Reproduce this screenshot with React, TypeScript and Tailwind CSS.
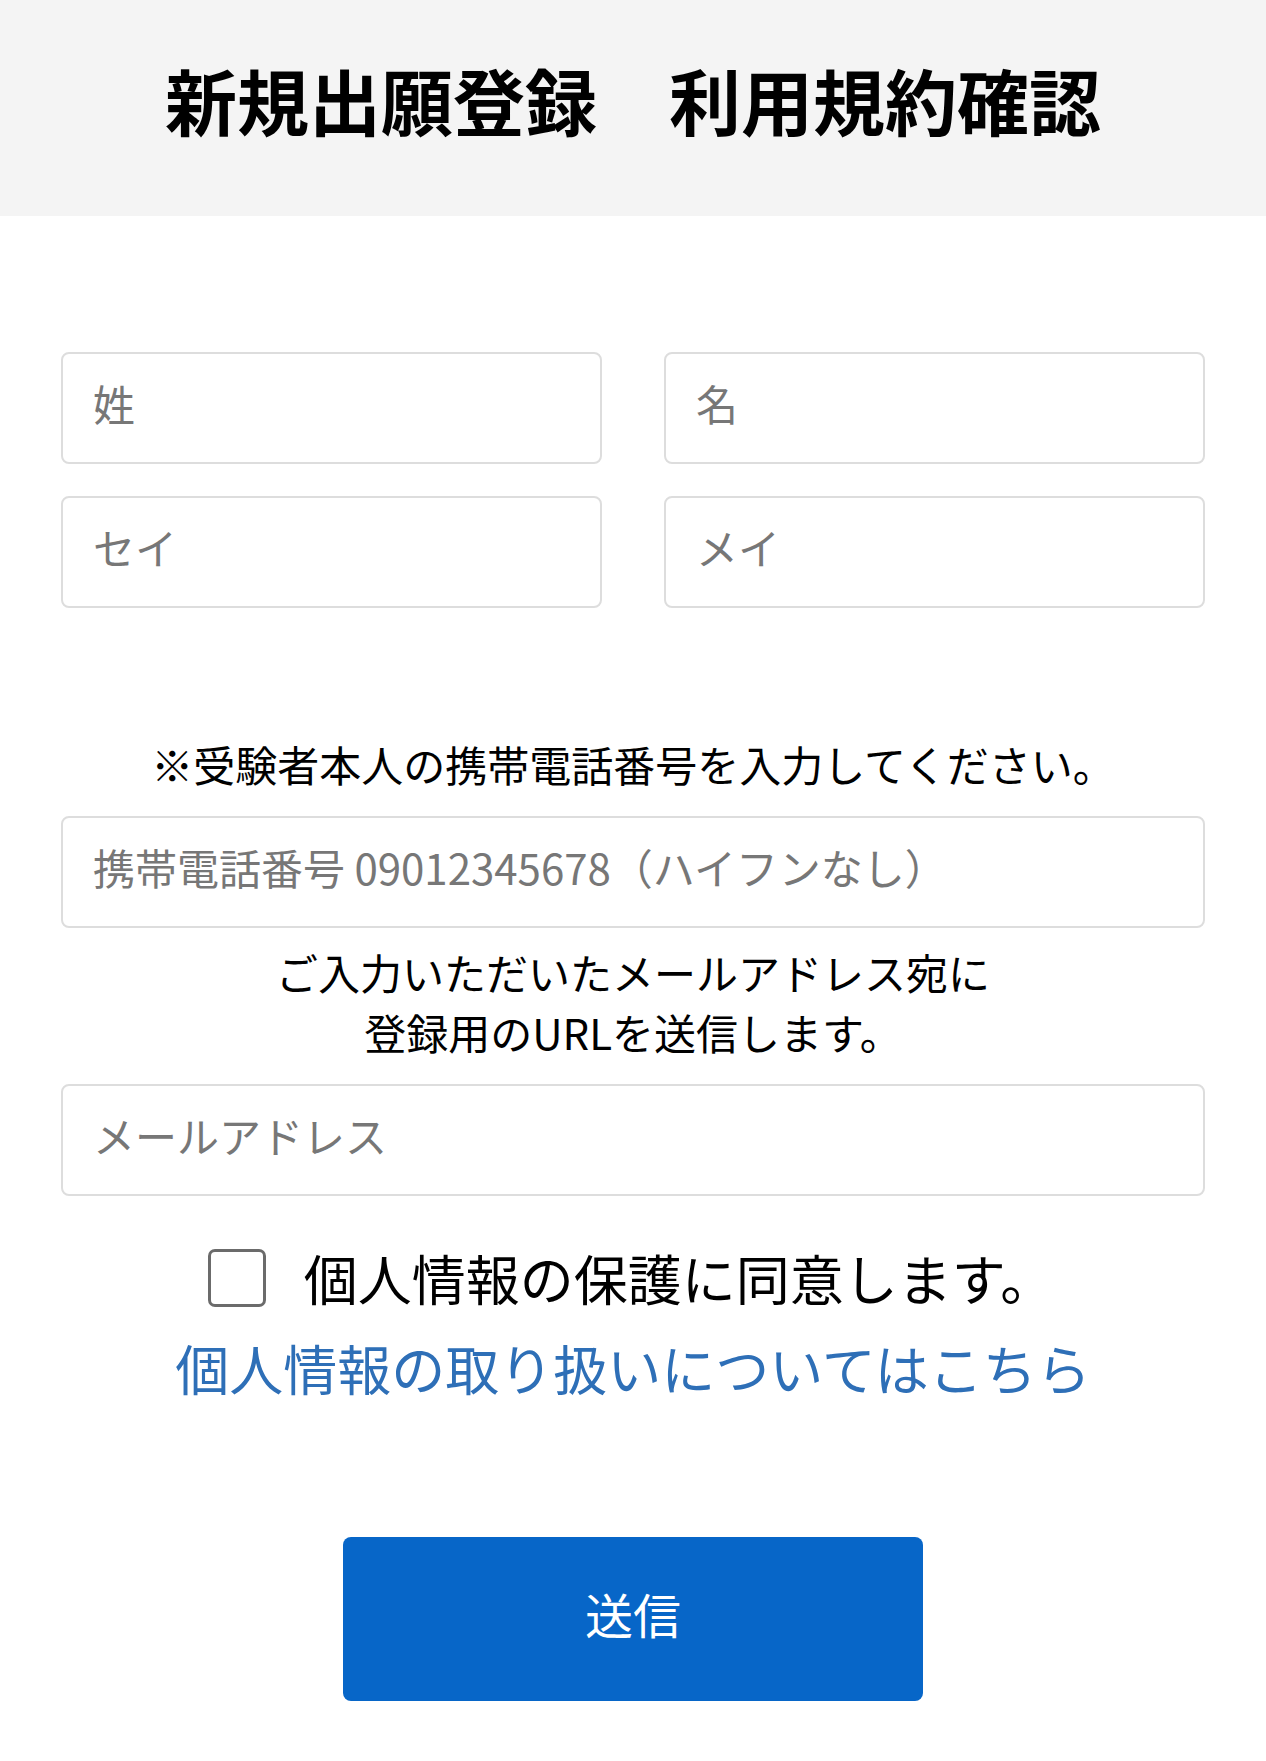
import React from "react";

const font = { fontFamily: '"Noto Sans CJK JP", "Noto Sans", sans-serif' };

function Field({ placeholder, type = "text" }: { placeholder: string; type?: string }) {
  return (
    <input
      type={type}
      placeholder={placeholder}
      className="block h-[112px] w-full rounded-[8px] border-2 border-[#dddddd] bg-white px-[30px] pb-[11px] text-[42px] text-[#333] outline-none placeholder:text-[#777]"
    />
  );
}

export default function App() {
  return (
    <div className="min-h-[1761px] bg-white text-black" style={font}>
      <header className="flex h-[216px] items-center justify-center bg-[#f4f4f4] pb-[18px]">
        <h1 className="text-[72px] font-bold leading-none">新規出願登録　利用規約確認</h1>
      </header>

      <form className="flex flex-col px-[61px] pt-[136px]" onSubmit={(e) => e.preventDefault()}>
        <div className="grid grid-cols-2 gap-x-[62px] gap-y-[32px]">
          <Field placeholder="姓" />
          <Field placeholder="名" />
          <Field placeholder="セイ" />
          <Field placeholder="メイ" />
        </div>

        <p className="mt-[126px] text-center text-[42px] leading-[60px]">
          ※受験者本人の携帯電話番号を入力してください。
        </p>
        <div className="mt-[22px]">
          <Field type="tel" placeholder="携帯電話番号 09012345678（ハイフンなし）" />
        </div>

        <p className="mt-[14px] text-center text-[42px] leading-[60px]">
          ご入力いただいたメールアドレス宛に
          <br />
          登録用のURLを送信します。
        </p>
        <div className="mt-[22px]">
          <Field type="email" placeholder="メールアドレス" />
        </div>

        <label className="mt-[50px] flex items-center justify-center gap-[38px] pr-[4px]">
          <span className="block h-[58px] w-[58px] shrink-0 rounded-[7px] border-[3px] border-[#6b6b6b] bg-white" />
          <span className="text-[54px] leading-[64px]">個人情報の保護に同意します。</span>
        </label>

        <a href="#" className="mt-[26px] block text-center text-[54px] leading-[64px] text-[#2e6fb7]">
          個人情報の取り扱いについてはこちら
        </a>

        <button
          type="submit"
          className="mx-auto mt-[137px] flex h-[164px] w-[580px] items-center justify-center rounded-[8px] bg-[#0766c8] pb-[12px] text-[48px] text-white"
        >
          送信
        </button>
      </form>
    </div>
  );
}
